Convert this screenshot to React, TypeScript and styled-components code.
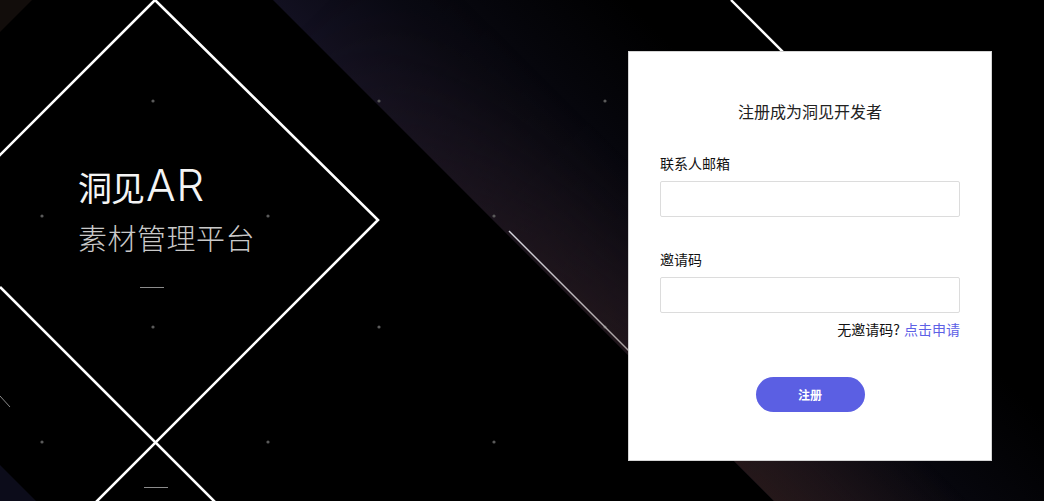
import React from "react";
import styled, { createGlobalStyle } from "styled-components";

const GlobalStyle = createGlobalStyle`
  html, body, #root {
    margin: 0;
    padding: 0;
    width: 100%;
    height: 100%;
  }
  body {
    background: #000;
    font-family: "Noto Sans CJK SC", "Noto Sans", sans-serif;
  }
  * { box-sizing: border-box; }
`;

const Page = styled.div`
  position: relative;
  width: 100%;
  height: 100%;
  min-height: 501px;
  overflow: hidden;
  background: #000;
  display: flex;
  justify-content: space-between;
  align-items: flex-start;
  padding: 51px 52px 0 78px;
`;

const Backdrop = styled.svg`
  position: absolute;
  inset: 0;
  width: 100%;
  height: 100%;
  pointer-events: none;
`;

const Brand = styled.div`
  position: relative;
  margin-top: 114px;
  display: flex;
  flex-direction: column;
  gap: 14px;
  color: #fff;
`;

const BrandTitle = styled.h1`
  margin: 0;
  height: 40px;
  font-size: 34px;
  line-height: 40px;
  font-weight: 400;
  color: #f4f4f4;
  letter-spacing: -1px;
  white-space: nowrap;
`;

const BrandLatin = styled.span`
  font-family: Inter, "Noto Sans", sans-serif;
  font-size: 44px;
  font-weight: 300;
  line-height: 40px;
  letter-spacing: 0.5px;
  margin-left: 2px;
`;

const BrandSub = styled.h2`
  margin: 0;
  font-size: 29px;
  line-height: 36px;
  font-weight: 300;
  color: #c9c9c9;
  letter-spacing: 0.5px;
`;

const Card = styled.section`
  position: relative;
  width: 364px;
  height: 410px;
  background: #fff;
  border: 1px solid #d4d4d4;
  padding: 49px 31px 0;
  display: flex;
  flex-direction: column;
`;

const CardTitle = styled.h3`
  margin: 0 0 32px;
  font-size: 16px;
  line-height: 20px;
  font-weight: 400;
  color: #222;
  text-align: center;
`;

const Field = styled.label<{ $gap?: number }>`
  display: flex;
  flex-direction: column;
  gap: 8px;
  margin-bottom: ${(p) => p.$gap ?? 0}px;
`;

const FieldLabel = styled.span`
  font-size: 14px;
  line-height: 20px;
  color: #111;
`;

const TextInput = styled.input`
  width: 300px;
  height: 36px;
  border: 1px solid #dcdcdc;
  border-radius: 2px;
  padding: 0 10px;
  font-size: 14px;
  outline: none;
  background: #fff;
`;

const Hint = styled.div`
  margin-top: 6px;
  text-align: right;
  font-size: 14px;
  line-height: 20px;
  color: #111;
`;

const HintLink = styled.a`
  color: #5d61e6;
  text-decoration: none;
  cursor: pointer;
  margin-left: 4px;
`;

const SubmitButton = styled.button`
  align-self: center;
  margin-top: 38px;
  width: 109px;
  height: 35px;
  border: none;
  border-radius: 18px;
  background: #5b5fe3;
  color: #fff;
  font-family: inherit;
  font-size: 12px;
  font-weight: 700;
  cursor: pointer;
`;

const dots: Array<[number, number]> = [
  [153, 101], [379, 101], [605, 101],
  [42, 216], [268, 216], [494, 216],
  [153, 327], [379, 327], [605, 327],
  [42, 442], [268, 442], [494, 442],
];

function BackgroundArt() {
  return (
    <Backdrop viewBox="0 0 1044 501" preserveAspectRatio="none">
      <defs>
        <linearGradient id="band" gradientUnits="userSpaceOnUse" x1="523" y1="250" x2="700" y2="73">
          <stop offset="0" stopColor="#121020" />
          <stop offset="0.35" stopColor="#090912" />
          <stop offset="1" stopColor="#000000" />
        </linearGradient>
        <linearGradient id="warm" gradientUnits="userSpaceOnUse" x1="523" y1="250" x2="620" y2="153">
          <stop offset="0" stopColor="#2a1a18" stopOpacity="0.8" />
          <stop offset="1" stopColor="#2a1a18" stopOpacity="0" />
        </linearGradient>
        <linearGradient id="along" gradientUnits="userSpaceOnUse" x1="300" y1="27" x2="760" y2="487">
          <stop offset="0" stopColor="#fff" stopOpacity="0" />
          <stop offset="0.5" stopColor="#fff" stopOpacity="0.6" />
          <stop offset="1" stopColor="#fff" stopOpacity="1" />
        </linearGradient>
        <mask id="alongMask">
          <rect x="0" y="0" width="1044" height="501" fill="url(#along)" />
        </mask>
        <linearGradient id="thin" gradientUnits="userSpaceOnUse" x1="509" y1="231" x2="628" y2="350">
          <stop offset="0" stopColor="#d8d8e0" />
          <stop offset="1" stopColor="#a8a0a0" />
        </linearGradient>
      </defs>

      <polygon points="273,0 1044,0 1044,501 774,501" fill="url(#band)" />
      <polygon points="273,0 1044,0 1044,501 774,501" fill="url(#warm)" mask="url(#alongMask)" />
      <polygon points="0,0 32,0 0,32" fill="#120d0b" />
      <polygon points="0,465 36,501 0,501" fill="#0c0c1a" />

      {dots.map(([x, y]) => (
        <circle key={`${x}-${y}`} cx={x} cy={y} r={1.6} fill="#5a5a5a" />
      ))}

      <g stroke="#ffffff" strokeWidth={2.6} fill="none" strokeLinejoin="miter">
        <polyline points="-4,159 155,0 378,220 96,502" />
        <line x1="0" y1="287" x2="215" y2="502" />
      </g>
      <line x1="731" y1="0" x2="880" y2="149" stroke="#ffffff" strokeWidth={2.4} />
      <line x1="509" y1="231" x2="640" y2="362" stroke="url(#thin)" strokeWidth={1.4} />
      <line x1="0" y1="396" x2="10" y2="407" stroke="#8a8a8a" strokeWidth={1} />
      <line x1="140" y1="287.5" x2="164" y2="287.5" stroke="#8c8c8c" strokeWidth={1} />
      <line x1="144" y1="487.5" x2="168" y2="487.5" stroke="#8c8c8c" strokeWidth={1} />
    </Backdrop>
  );
}

export default function App() {
  return (
    <>
      <GlobalStyle />
      <Page>
        <BackgroundArt />
        <Brand>
          <BrandTitle>
            洞见<BrandLatin>AR</BrandLatin>
          </BrandTitle>
          <BrandSub>素材管理平台</BrandSub>
        </Brand>
        <Card>
          <CardTitle>注册成为洞见开发者</CardTitle>
          <Field $gap={32}>
            <FieldLabel>联系人邮箱</FieldLabel>
            <TextInput type="email" />
          </Field>
          <Field>
            <FieldLabel>邀请码</FieldLabel>
            <TextInput type="text" />
          </Field>
          <Hint>
            无邀请码?<HintLink>点击申请</HintLink>
          </Hint>
          <SubmitButton type="button">注册</SubmitButton>
        </Card>
      </Page>
    </>
  );
}
